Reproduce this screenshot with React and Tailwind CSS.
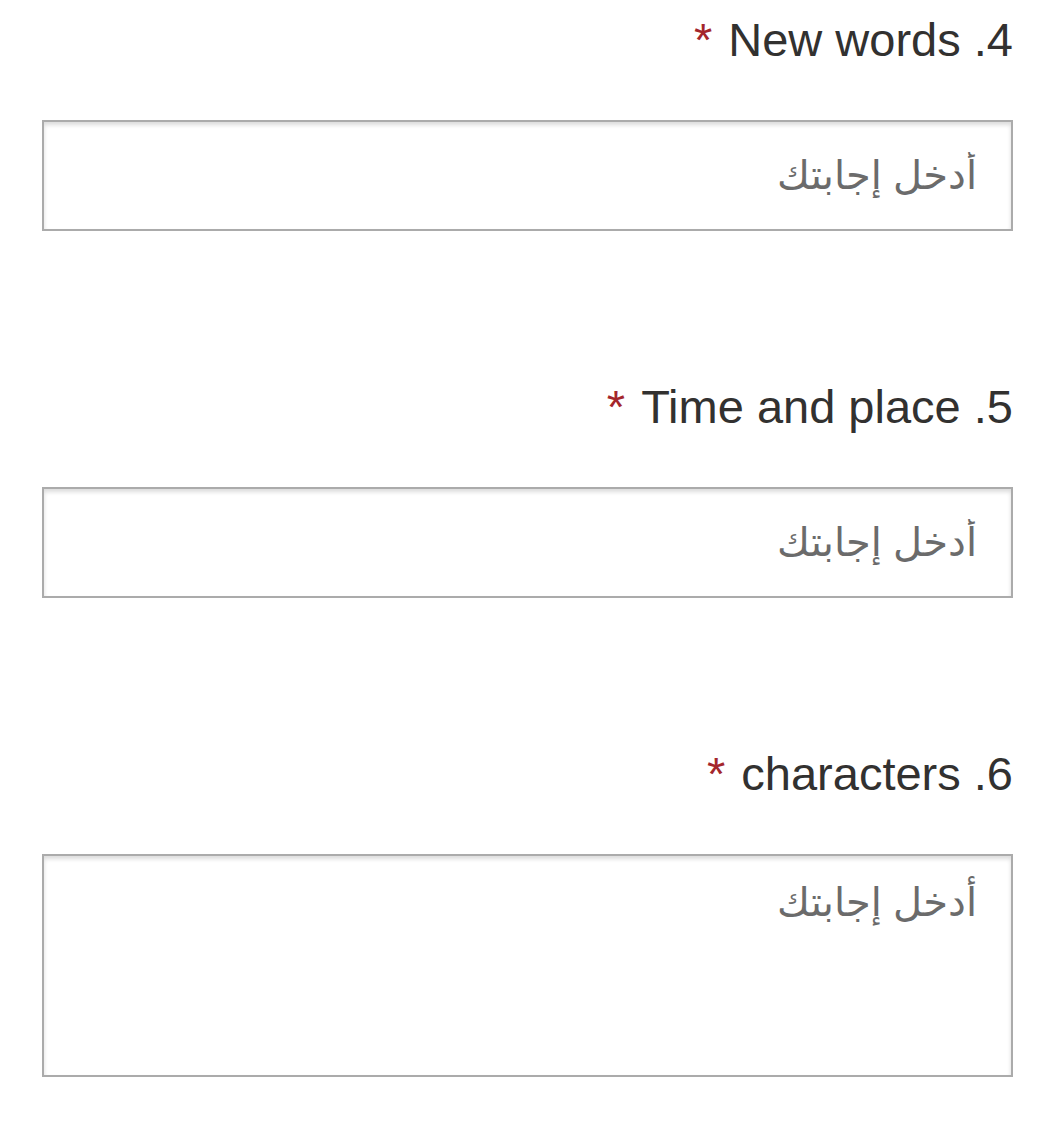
import React from 'react';

const questions = [
  { id: 4, title: 'New words', multiline: false },
  { id: 5, title: 'Time and place', multiline: false },
  { id: 6, title: 'characters', multiline: true },
];

const fieldClass =
  'block w-full border-2 border-[#ababab] bg-white pr-[34px] pl-4 text-[40px] text-[#333] placeholder:text-[#6b6b6b] shadow-[inset_0_3px_4px_rgba(0,0,0,0.14)] outline-none';

const Question = ({ q }) => (
  <div>
    <div className="text-[47px] leading-[54px] text-[#323130]">
      <span>{q.id}. {q.title}</span>
      <span className="text-[#a4262c] mr-[16px]">*</span>
    </div>
    <div className="mt-[53px]">
      {q.multiline ? (
        <textarea
          placeholder="أدخل إجابتك"
          className={fieldClass + ' h-[223px] pt-[20px] resize-none leading-[52px]'}
        />
      ) : (
        <input type="text" placeholder="أدخل إجابتك" className={fieldClass + ' h-[111px]'} />
      )}
    </div>
  </div>
);

export default function App() {
  return (
    <div
      dir="rtl"
      className="flex flex-col gap-[149px] w-[1056px] min-h-[1124px] bg-white pt-[13px] pr-[43px] pl-[42px]"
      style={{ fontFamily: '"Liberation Sans", Arial, "DejaVu Sans", sans-serif' }}
    >
      {questions.map((q) => (
        <Question key={q.id} q={q} />
      ))}
    </div>
  );
}
